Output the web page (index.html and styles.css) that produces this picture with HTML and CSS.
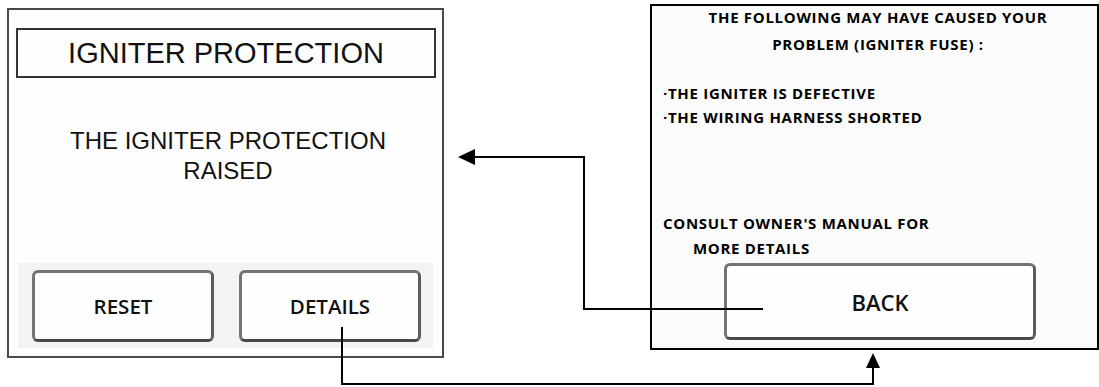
FILE: index.html
```html
<!DOCTYPE html>
<html lang="en">
<head>
<meta charset="utf-8">
<title>Igniter protection</title>
<link rel="stylesheet" href="styles.css">
</head>
<body>
<div class="stage">
  <section class="panel panel-main">
    <div class="title-box">IGNITER PROTECTION</div>
    <p class="message">THE IGNITER PROTECTION<br>RAISED</p>
    <div class="button-band">
      <div class="hmi-btn btn-small">RESET</div>
      <div class="hmi-btn btn-small">DETAILS</div>
    </div>
  </section>
  <section class="panel panel-details">
    <p class="cause-head">THE FOLLOWING MAY HAVE CAUSED YOUR<br>PROBLEM (IGNITER FUSE) :</p>
    <ul class="cause-list">
      <li>·THE IGNITER IS DEFECTIVE</li>
      <li>·THE WIRING HARNESS SHORTED</li>
    </ul>
    <p class="consult"><span class="consult-1">CONSULT OWNER'S MANUAL FOR</span><span class="consult-2">MORE DETAILS</span></p>
    <div class="hmi-btn btn-back">BACK</div>
  </section>
  <svg class="connectors" width="1099" height="387" viewBox="0 0 1099 387" aria-hidden="true">
    <polyline points="342,327 342,384 873,384 873,366" fill="none" stroke="#000" stroke-width="2"/>
    <polygon points="873,353 866,368 880,368" fill="#000"/>
    <polyline points="763,309 584,309 584,157 472,157" fill="none" stroke="#000" stroke-width="2"/>
    <polygon points="458,157 475,149 475,165" fill="#000"/>
  </svg>
</div>
</body>
</html>
```
FILE: styles.css
```css
html, body {
  margin: 0;
  padding: 0;
  background: #ffffff;
}

.stage {
  position: relative;
  width: 1099px;
  height: 387px;
  display: flex;
  align-items: flex-start;
  padding-left: 7px;
  box-sizing: border-box;
}

.panel {
  box-sizing: border-box;
}

.panel-main {
  margin-top: 8px;
  width: 437px;
  height: 350px;
  border: 2px solid #4a4a4a;
  background: #fefefe;
  padding: 18px 6px 0 7px;
  display: flex;
  flex-direction: column;
}

.title-box {
  width: 420px;
  height: 50px;
  box-sizing: border-box;
  border: 2px solid #333;
  font-family: "Liberation Sans", Arial, sans-serif;
  font-size: 29px;
  line-height: 46px;
  text-align: center;
  color: #111;
}

.message {
  margin: 48px 0 0 0;
  font-family: "Liberation Sans", Arial, sans-serif;
  font-size: 24px;
  line-height: 30px;
  text-align: center;
  color: #111;
  padding-left: 4px;
}

.button-band {
  margin-top: auto;
  margin-bottom: 8px;
  margin-left: 2px;
  width: 415px;
  height: 85px;
  box-sizing: border-box;
  background: #f3f3f3;
  padding: 7px 12px 0 14px;
  display: flex;
  gap: 25px;
}

.hmi-btn {
  box-sizing: border-box;
  border: 3px solid #747474;
  border-right-color: #5c5c5c;
  border-bottom-color: #484848;
  border-radius: 6px;
  background: #fefefe;
  display: flex;
  align-items: center;
  justify-content: center;
  font-family: "Open Sans", "DejaVu Sans", sans-serif;
  font-weight: 600;
  color: #111;
}

.btn-small {
  width: 182px;
  height: 72px;
  font-size: 20.5px;
}

.panel-details {
  margin-top: 4px;
  margin-left: 206px;
  width: 449px;
  height: 346px;
  border: 2px solid #000;
  background: #fbfbfb;
  padding: 0 0 0 11px;
  display: flex;
  flex-direction: column;
  font-family: "Open Sans", "DejaVu Sans", sans-serif;
  font-weight: 700;
  font-size: 15px;
  letter-spacing: 0.7px;
  color: #000;
}

.cause-head {
  margin: -2px 0 0 0;
  line-height: 27px;
  text-align: center;
  padding-right: 4px;
}

.cause-list {
  list-style: none;
  margin: 23px 0 0 0;
  padding: 0;
  line-height: 24px;
}

.consult {
  margin: 82px 0 0 0;
  line-height: 25px;
  display: flex;
  flex-direction: column;
}

.consult-2 {
  padding-left: 30px;
}

.btn-back {
  margin: 2px 0 0 61px;
  width: 312px;
  height: 77px;
  font-size: 22px;
  font-weight: 600;
  letter-spacing: 0;
}

.connectors {
  position: absolute;
  left: 0;
  top: 0;
  pointer-events: none;
}
```
